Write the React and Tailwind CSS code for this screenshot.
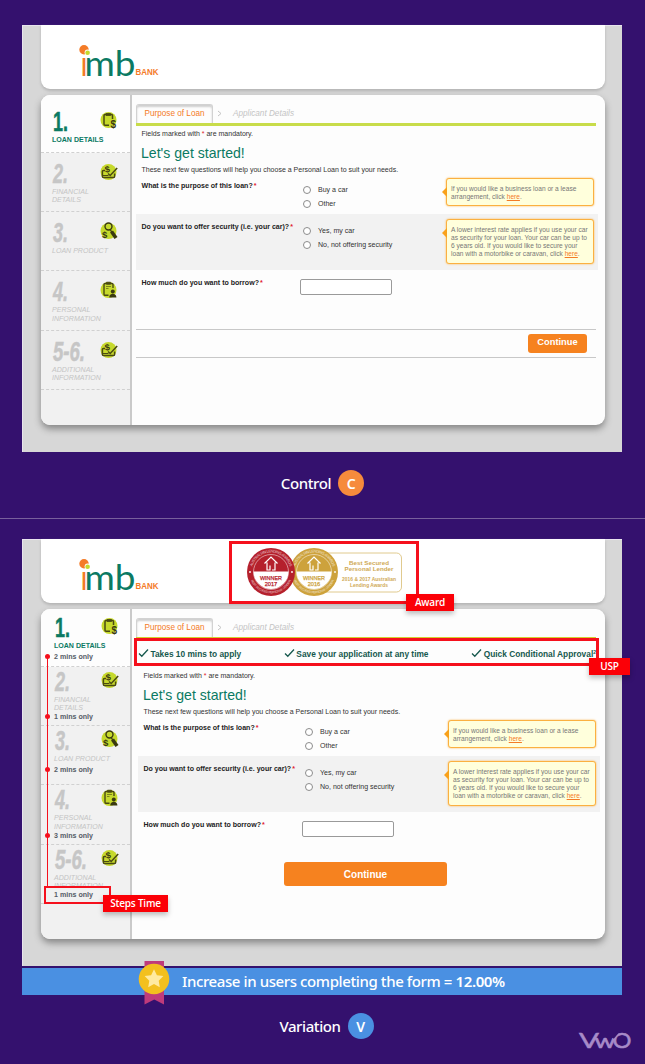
import React from "react";

function CardCheck() {
  return (
    <g fill="none" stroke="#4a4a12" strokeWidth="1.5">
      <path d="M5 7.500H3.400a1 1 0 0 0-1 1v5a1 1 0 0 0 1 1h10.200a1 1 0 0 0 1-1v-3" />
      <path d="M8 10.500l2.200 2L17.200 5" />
      <path d="M2.500 12.500h6" strokeWidth="1" />
      <text x="5" y="9.300" fontSize="9" fontWeight="bold" fill="#3a3a10" stroke="none" transform="rotate(-8 8 7)">$</text>
    </g>
  );
}

function StepIcon({ kind }) {
  return (
    <svg viewBox="0 0 18 18" className="-mt-px h-[18px] w-[18px] overflow-visible font-['Liberation_Sans',sans-serif]">
      <circle cx="8.500" cy="9" r="8" fill="#c6d92c" />
      {kind === "clip" && (
        <g fill="none" stroke="#4a4a12" strokeWidth="1.500">
          <path d="M9 14.200H5a1 1 0 0 1-1-1V4.500a1 1 0 0 1 1-1h6.500a1 1 0 0 1 1 1V8" />
          <path d="M6 2.500h4.500v2H6z" fill="#4a4a12" strokeWidth="0.800" />
          <text x="10.500" y="16.500" fontSize="10" fontWeight="bold" fill="#3a3a10" stroke="none">$</text>
        </g>
      )}
      {kind === "card" && <CardCheck />}
      {kind === "search" && (
        <g fill="none" stroke="#3a3a10">
          <circle cx="8.500" cy="4.500" r="3.500" strokeWidth="1.400" />
          <path d="M10.500 8l1.200 2" strokeWidth="1.400" />
          <path d="M11.500 9.500l4.500 6.500" strokeWidth="3.600" />
          <text x="2" y="15.500" fontSize="9.500" fontWeight="bold" fill="#3a3a10" stroke="none">$</text>
        </g>
      )}
      {kind === "person" && (
        <g fill="none" stroke="#4a4a12" strokeWidth="1.400">
          <path d="M8.500 14.200H5a1 1 0 0 1-1-1V3.500a1 1 0 0 1 1-1h7a1 1 0 0 1 1 1V7" />
          <path d="M6.500 1.200h4v2h-4z" fill="#4a4a12" strokeWidth="0.800" />
          <path d="M6 5.500h5M6 7.500h2.500" strokeWidth="0.600" />
          <circle cx="12.800" cy="10.500" r="2" fill="#3a3a10" stroke="none" />
          <path d="M9.200 16.500c0-5 7.200-5 7.200 0z" fill="#3a3a10" stroke="none" />
        </g>
      )}
    </svg>
  );
}

function Logo() {
  return (
    <svg viewBox="0 0 84 36" className="h-9 w-[84px] overflow-visible">
      <circle cx="7" cy="6.800" r="4.700" fill="#f47b27" />
      <circle cx="10.600" cy="9.600" r="3" fill="#fff" />
      <circle cx="10.600" cy="9.700" r="2.300" fill="#c6d92c" />
      <g fontFamily="Lato, sans-serif" fontSize="35">
        <text x="3.500" y="32.500" fill="#f47b27" textLength="7" lengthAdjust="spacingAndGlyphs">ı</text>
        <text x="7.500" y="32.500" fill="#0b7a63" textLength="51" lengthAdjust="spacingAndGlyphs">mb</text>
      </g>
      <text x="58.500" y="32.300" fill="#f47b27" fontFamily="'Liberation Sans Narrow', 'Liberation Sans', sans-serif" fontWeight="bold" fontSize="9.800" textLength="23" lengthAdjust="spacingAndGlyphs">BANK</text>
    </svg>
  );
}

const steps = [
  { n: "1.", w: 15, label: ["LOAN DETAILS"], icon: "clip", active: true },
  { n: "2.", w: 15, label: ["FINANCIAL", "DETAILS"], icon: "card" },
  { n: "3.", w: 15, label: ["LOAN PRODUCT"], icon: "search" },
  { n: "4.", w: 15, label: ["PERSONAL", "INFORMATION"], icon: "person" },
  { n: "5-6.", w: 32, label: ["ADDITIONAL", "INFORMATION"], icon: "card" },
];

function Sidebar({ variation }) {
  return (
    <div className="w-[89px] shrink-0 bg-[#f1f1f1]">
      {steps.map((s) => (
        <div
          key={s.n}
          className={
            "border-b border-dashed border-[#d0d0d0] " +
            (s.active ? "h-[58px] bg-[#fdfdfd] " : "h-[59.200px] ") +
            (variation
              ? s.active ? "pt-[9px] pl-[13px]" : "pt-[5px] pl-[13px]"
              : s.active ? "pt-[17px] pl-[11px]" : "pt-[11px] pl-[11px]")
          }
        >
          <div className={"flex h-[19px] items-start justify-between " + (variation ? "pr-[11px]" : "pr-[12px]")}>
            <svg className="h-[20px] w-[40px] overflow-visible">
              <text
                x="1"
                y="19"
                fontFamily="'Liberation Sans Narrow', 'Liberation Sans', sans-serif"
                fontWeight="bold"
                fontStyle={s.active ? "normal" : "italic"}
                fontSize="27"
                fill={s.active ? "#0b7a63" : "#c6c6c6"}
                stroke={s.active ? "#0b7a63" : "#c6c6c6"}
                strokeWidth="0.500"
                textLength={s.w}
                lengthAdjust="spacingAndGlyphs"
              >
                {s.n}
              </text>
            </svg>
            <StepIcon kind={s.icon} />
          </div>
          <div
            className={
              "mt-[5px] text-[7.050px] leading-[8.300px] whitespace-nowrap " +
              (s.active ? "font-bold text-[#0b7a63]" : "text-[#c4c4c4] italic")
            }
          >
            {s.label.map((l) => (
              <div key={l}>{l}</div>
            ))}
          </div>
        </div>
      ))}
    </div>
  );
}

function Radio({ label }) {
  return (
    <div className="flex h-[14px] items-center gap-[7.500px]">
      <span className="h-[8px] w-[8px] rounded-full border border-[#8c8c8c] bg-white" />
      <span className="text-[7.050px] leading-[10px] text-[#333]">{label}</span>
    </div>
  );
}

function Tip({ lines }) {
  return (
    <div className="relative rounded-[3px] border border-[#fbb040] bg-[#ffffdc] pt-[5.500px] pb-[4.500px] pl-[4px] text-[6.600px] leading-[8.200px] whitespace-nowrap text-[#777] shadow-[0_0_2px_#fbb040]">
      <span className="absolute top-[8px] -left-[5px] h-0 w-0 border-y-[5px] border-r-[5px] border-y-transparent border-r-[#f9a11b]" />
      {lines.map((l, i) => (
        <div key={l}>
          {l}
          {i === lines.length - 1 && (
            <>
              {" "}
              <span className="text-[#f47b27] underline">here</span>.
            </>
          )}
        </div>
      ))}
    </div>
  );
}

function Question({ children }) {
  return (
    <div className="flex gap-[1px] pl-[5.500px] text-[7.050px] leading-[10px] font-bold whitespace-nowrap text-[#222]">
      {children}
      <span className="text-[#e0202c]">*</span>
    </div>
  );
}

function Form() {
  return (
    <div className="w-[462px]">
      <p className="mt-[2px] pl-[5.500px] text-[7px] leading-[11px] text-[#333]">
        Fields marked with <span className="text-[#e0202c]">*</span> are mandatory.
      </p>
      <h1 className="mt-[5px] pl-[5px] text-[14.100px] leading-[18px] text-[#0b7a63]">Let's get started!</h1>
      <p className="mt-[2px] pl-[5.500px] text-[7.030px] leading-[11px] text-[#333]">
        These next few questions will help you choose a Personal Loan to suit your needs.
      </p>
      <div className="grid h-[39px] grid-cols-[166.500px_143.500px_148px] items-start">
        <div className="pt-[6px]"><Question>What is the purpose of this loan?</Question></div>
        <div className="pt-[8px]"><Radio label="Buy a car" /><Radio label="Other" /></div>
        <div className="pt-[3px]">
          <Tip lines={["If you would like a business loan or a lease", "arrangement, click"]} />
        </div>
      </div>
      <div className="grid h-[56px] grid-cols-[166.500px_143.500px_148px] items-start bg-[#f2f2f2]">
        <div className="pt-[8px]"><Question>Do you want to offer security (i.e. your car)?</Question></div>
        <div className="pt-[10px]"><Radio label="Yes, my car" /><Radio label="No, not offering security" /></div>
        <div className="pt-[5px]">
          <Tip
            lines={[
              "A lower interest rate applies if you use your car",
              "as security for your loan. Your car can be up to",
              "6 years old. If you would like to secure your",
              "loan with a motorbike or caravan, click",
            ]}
          />
        </div>
      </div>
      <div className="flex h-[59px] items-start">
        <div className="w-[164px] pt-[8px]"><Question>How much do you want to borrow?</Question></div>
        <div className="mt-[9px] h-[16px] w-[92px] rounded-[2px] border border-[#9a9a9a] bg-white" />
      </div>
    </div>
  );
}

function Tabs({ variation }) {
  return (
    <div
      className={
        "flex w-[460px] items-end " +
        (variation ? "h-[30px] border-b-2 border-[#d3d030]" : "h-[31px] border-b-[3px] border-[#c8dc4a]")
      }
    >
      <div className="flex h-[19px] w-[77px] items-center justify-center rounded-t-[3px] border border-b-0 border-[#d2d2d2] bg-[#fdfdfd] text-[8.200px] text-[#f47b27] shadow-[inset_0_2px_2px_#cfcfcf]">
        Purpose of Loan
      </div>
      <svg viewBox="0 0 5 7" className="mb-[6px] ml-[4px] h-[7px] w-[5px]">
        <path d="M1 1l3 2.500L1 6" fill="none" stroke="#c4c4c4" />
      </svg>
      <div className="ml-[11px] h-[19px] text-[8.200px] leading-[19px] text-[#c4c4c4] italic">Applicant Details</div>
    </div>
  );
}

function Usp({ text, sup }) {
  return (
    <div className="flex items-center gap-[1.500px] whitespace-nowrap">
      <svg viewBox="0 0 11 10" className="-mt-[2px] h-[10px] w-[11px]">
        <path d="M1 5.500l2.800 2.800L10 1.500" fill="none" stroke="#17594e" strokeWidth="1.300" />
      </svg>
      <span>{text}{sup && <sup className="text-[5px]">{sup}</sup>}</span>
    </div>
  );
}

function Award() {
  const badge = (cx, color, year, id) => (
    <g>
      <circle cx={cx} cy="25" r="24" fill={color} />
      <circle cx={cx} cy="25" r="17.500" fill="none" stroke="#fff" strokeWidth="0.500" />
      <path d={`M${cx - 17.500} 24.500h35a17.500 17.500 0 0 1-35 0z`} fill="#fff" />
      <path d={`M${cx - 6.500} 16.500l6.500-6.500 6.500 6.500M${cx - 4} 15.500v7.500h3v-4.500M${cx + 4} 15.500v7.500h-3`} fill="none" stroke="#fff" strokeWidth="1.200" />
      <circle cx={cx - 21} cy="25" r="0.900" fill="#fff" />
      <circle cx={cx + 21} cy="25" r="0.900" fill="#fff" />
      <path id={id + "a"} d={`M${cx - 19.200} 22a19.400 19.400 0 0 1 38.400 0`} fill="none" />
      <path id={id + "b"} d={`M${cx - 21.500} 29a22 22 0 0 0 43 0`} fill="none" />
      <g fill="#fff" opacity="0.700" textAnchor="middle">
        <text fontSize="3.800"><textPath href={"#" + id + "a"} startOffset="50%" textLength="50">AUSTRALIAN LENDING AWARDS</textPath></text>
        <text fontSize="3.200"><textPath href={"#" + id + "b"} startOffset="50%" textLength="50">BEST SECURED PERSONAL LENDER</textPath></text>
      </g>
      <g fill={color} stroke={color} strokeWidth="0.250" fontSize="5.700" textAnchor="middle">
        <text x={cx} y="33" textLength="22" lengthAdjust="spacingAndGlyphs">WINNER</text>
        <text x={cx} y="38.800" textLength="12.500">{year}</text>
      </g>
    </g>
  );
  return (
    <svg viewBox="0 0 156 50" className="h-[50px] w-[156px] font-['Liberation_Sans',sans-serif]">
      <rect x="68" y="6" width="87.500" height="39" rx="5" fill="#fff" stroke="#d8bd72" strokeWidth="0.800" />
      {badge(68, "#cda23c", "2016", "gold")}
      {badge(25, "#b5202c", "2017", "red")}
      <g fill="#cfa955" fontWeight="bold" textAnchor="middle">
        <text x="123" y="18" fontSize="6.200" textLength="40">Best Secured</text>
        <text x="123" y="24" fontSize="6.200" textLength="49">Personal Lender</text>
        <text x="123" y="33.600" fontSize="4.900" textLength="54">2016 &amp; 2017 Australian</text>
        <text x="123" y="39.600" fontSize="4.900" textLength="38">Lending Awards</text>
      </g>
    </svg>
  );
}

function Screen({ variation }) {
  return (
    <div className="relative mx-[22px] h-[427px] w-[600px] bg-[#d7d7d7] pl-[19px] font-['Liberation_Sans',Arial,sans-serif] shadow-[inset_1px_1px_0_#e8e4ee]">
      <div className="flex h-[64px] w-[564px] rounded-b-[9px] bg-white pt-[18px] pl-[36px] shadow-[0_2px_3px_#b4b4b4]">
        <Logo />
        {variation && <div className="-mt-[10px] ml-[85px]"><Award /></div>}
      </div>
      <div className="mt-[6px] flex h-[330px] w-[564px] overflow-hidden rounded-[9px] bg-[#fdfdfd] shadow-[0_4px_7px_#888]">
        <Sidebar variation={variation} />
        <div className="w-[2px] bg-[#cacaca]" />
        <div className="pl-[4px]">
          <Tabs variation={variation} />
          {variation ? (
            <>
              <div className="flex h-[29px] w-[460px] items-center justify-between pt-px pl-[2px] text-[8.350px] font-bold text-[#17594e]">
                <Usp text="Takes 10 mins to apply" />
                <Usp text="Save your application at any time" />
                <Usp text="Quick Conditional Approval" sup="2" />
              </div>
              <div className="pl-[2px]"><Form /></div>
              <div className="mt-[-9px] ml-[148px] flex h-[24px] w-[163px] items-center justify-center rounded-[3px] bg-[#f6821f] text-[10px] font-bold text-white">
                Continue
              </div>
            </>
          ) : (
            <>
              <Form />
              <div className="flex h-[29px] w-[460px] items-center justify-end border-y border-[#c8c8c8] pr-[9px] pb-px">
                <div className="flex h-[19px] w-[59px] items-center justify-center rounded-[3px] bg-[#f6821f] text-[9.300px] font-bold text-white">
                  Continue
                </div>
              </div>
            </>
          )}
        </div>
      </div>
      {variation && <Annotations />}
    </div>
  );
}

function Tag({ className, children }) {
  return (
    <div className={"absolute flex h-[17px] items-center justify-center bg-[#fb0007] font-['Open_Sans','Noto_Sans',sans-serif] text-[10px] font-semibold tracking-[-0.2px] whitespace-nowrap text-white shadow-[0_3px_5px_rgba(0,0,0,0.25)] " + className}>
      {children}
    </div>
  );
}

function Annotations() {
  const time = "absolute left-[32px] text-[7.100px] leading-[10px] font-bold text-[#555c66] whitespace-nowrap ";
  const dot = "absolute left-[23px] h-[5px] w-[5px] rounded-full bg-[#f5101c] ";
  return (
    <>
      <div className="absolute top-[117px] left-[25px] h-[231px] w-px bg-[#f5101c]" />
      <span className={dot + "top-[115px]"} />
      <span className={dot + "top-[175px]"} />
      <span className={dot + "top-[228px]"} />
      <span className={dot + "top-[294px]"} />
      <span className={time + "top-[113px]"}>2 mins only</span>
      <span className={time + "top-[173px]"}>1 mins only</span>
      <span className={time + "top-[226px]"}>2 mins only</span>
      <span className={time + "top-[292px]"}>3 mins only</span>
      <div className="absolute top-[347px] left-[22px] h-[18px] w-[67px] border-2 border-[#f5101c] bg-[#f1f1f1]" />
      <span className={time + "top-[351px]"}>1 mins only</span>
      <Tag className="top-[356px] left-[81px] w-[65px]">Steps Time</Tag>
      <div className="absolute top-[2px] left-[207px] h-[63px] w-[190px] border-[3px] border-[#f5101c]" />
      <Tag className="top-[55px] left-[384px] w-[48px]">Award</Tag>
      <div className="absolute top-[99px] left-[112px] h-[28px] w-[465px] border-[3px] border-[#f5101c]" />
      <Tag className="top-[119px] left-[567px] w-[41px]">USP</Tag>
    </>
  );
}

function Caption({ label, letter, color }) {
  return (
    <div className="flex h-[26px] items-center justify-center gap-[7px] font-['Noto_Sans',sans-serif] text-[15px] font-medium tracking-[-0.4px] text-white">
      {label}
      <span className={"flex h-[26px] w-[26px] items-center justify-center rounded-full text-[14px] font-semibold tracking-normal " + color}>
        {letter}
      </span>
    </div>
  );
}

export default function App() {
  return (
    <div className="h-[1064px] w-[645px] overflow-hidden bg-[#34116e]">
      <div className="h-[519px] border-b border-[#78609c] pt-[25px]">
        <Screen />
        <div className="mt-[18px]"><Caption label="Control" letter="C" color="bg-[#f68b3c]" /></div>
      </div>
      <div className="pt-[20px]">
        <Screen variation />
        <div className="relative mx-[22px] mt-[2px] flex h-[27px] w-[600px] items-center bg-[#4a90e2] pl-[160px] font-['Noto_Sans',sans-serif] text-[15px] font-medium tracking-[-0.4px] whitespace-nowrap text-white">
          <svg viewBox="0 0 32 44" className="absolute -top-[7px] left-[116px] h-[44px] w-[32px]">
            <path d="M6.500 0h19.500v43.500l-9.750-5-9.750 5z" fill="#bf3b7b" />
            <circle cx="16" cy="18" r="15.300" fill="#f3c01e" />
            <path d="M16 8.200l2.900 6 6.500.9-4.700 4.600 1.100 6.500-5.800-3.100-5.800 3.100 1.100-6.500-4.700-4.600 6.500-.9z" fill="#ffeaa0" />
          </svg>
          <span>Increase in users completing the form = <b className="font-semibold">12.00%</b></span>
        </div>
        <div className="mt-[18px] grid grid-cols-[1fr_auto_1fr] items-start">
          <span />
          <div className="pl-[8px]"><Caption label="Variation" letter="V" color="bg-[#4a90e2]" /></div>
          <svg viewBox="0 0 54 20" className="mt-[17px] mr-[13px] h-5 w-[54px] justify-self-end overflow-visible">
            <g fill="#a78bc8" stroke="#a78bc8" strokeWidth="0.500" fontFamily="Lato, sans-serif">
              <text x="1" y="18" fontSize="22" textLength="20" lengthAdjust="spacingAndGlyphs">V</text>
              <text x="16.500" y="18" fontSize="20" textLength="21" lengthAdjust="spacingAndGlyphs">w</text>
              <text x="34.500" y="18" fontSize="22" textLength="19" lengthAdjust="spacingAndGlyphs">O</text>
            </g>
            <path d="M35 8l5-6" stroke="#34116e" strokeWidth="2" />
          </svg>
        </div>
      </div>
    </div>
  );
}
